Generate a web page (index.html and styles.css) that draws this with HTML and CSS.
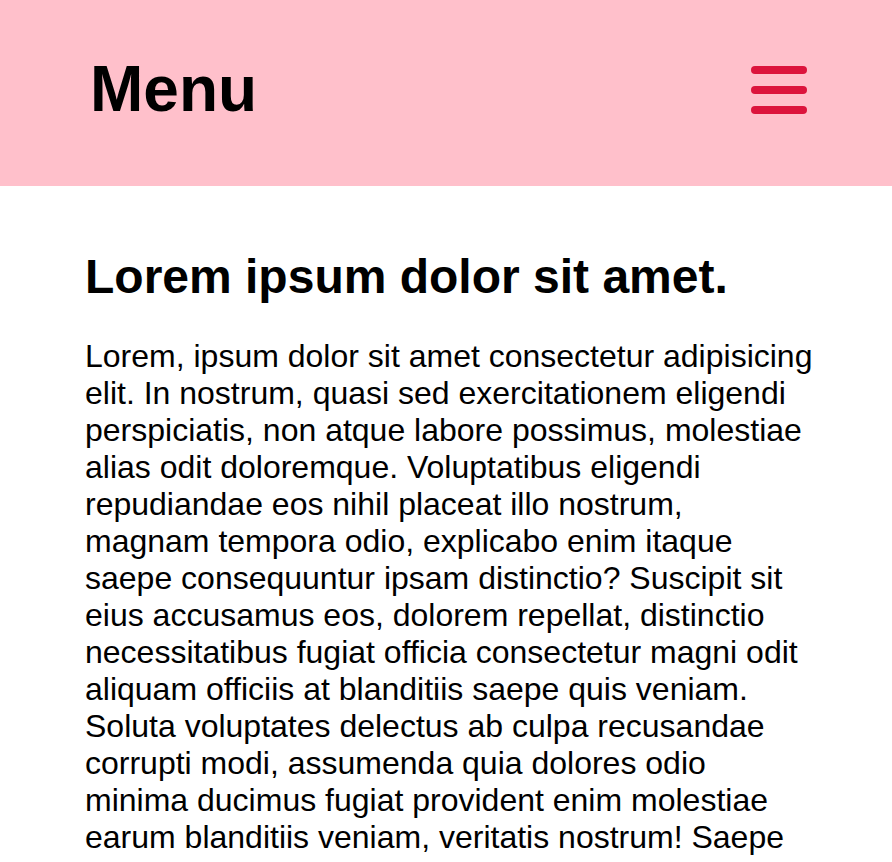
FILE: index.html
```html
<!DOCTYPE html>
<html lang="en">
<head>
<meta charset="utf-8">
<title>Menu</title>
<link rel="stylesheet" href="styles.css">
</head>
<body>
<header class="topbar">
  <div class="brand">Menu</div>
  <button class="burger" aria-label="Open menu">
    <span class="bar"></span>
    <span class="bar"></span>
    <span class="bar"></span>
  </button>
</header>
<main class="content">
  <h1 class="title">Lorem ipsum dolor sit amet.</h1>
  <p class="text">Lorem, ipsum dolor sit amet consectetur adipisicing elit. In nostrum, quasi sed exercitationem eligendi perspiciatis, non atque labore possimus, molestiae alias odit doloremque. Voluptatibus eligendi repudiandae eos nihil placeat illo nostrum, magnam tempora odio, explicabo enim itaque saepe consequuntur ipsam distinctio? Suscipit sit eius accusamus eos, dolorem repellat, distinctio necessitatibus fugiat officia consectetur magni odit aliquam officiis at blanditiis saepe quis veniam. Soluta voluptates delectus ab culpa recusandae corrupti modi, assumenda quia dolores odio minima ducimus fugiat provident enim molestiae earum blanditiis veniam, veritatis nostrum! Saepe blanditiis nulla dolorum vitae dolorem sint aut.</p>
</main>
</body>
</html>
```
FILE: styles.css
```css
* { box-sizing: border-box; }
html, body { margin: 0; padding: 0; }
body {
  font-family: "Liberation Sans", Arial, sans-serif;
  color: #000;
  background: #fff;
}
.topbar {
  height: 186px;
  background: #ffc0cb;
  display: flex;
  align-items: center;
  justify-content: space-between;
  padding: 0 85px 0 90px;
}
.brand {
  font-size: 64px;
  font-weight: 700;
  line-height: 1;
  margin-top: -8px;
}
.burger {
  background: none;
  border: 0;
  padding: 0;
  display: flex;
  flex-direction: column;
  gap: 12px;
  cursor: pointer;
  margin-top: -6px;
}
.bar {
  display: block;
  width: 56px;
  height: 8px;
  border-radius: 4px;
  background: #dc143c;
}
.content {
  padding: 0 78px 0 85px;
}
.title {
  font-size: 48px;
  font-weight: 700;
  margin: 63px 0 34px;
}
.text {
  font-size: 32px;
  margin: 0;
}
```
